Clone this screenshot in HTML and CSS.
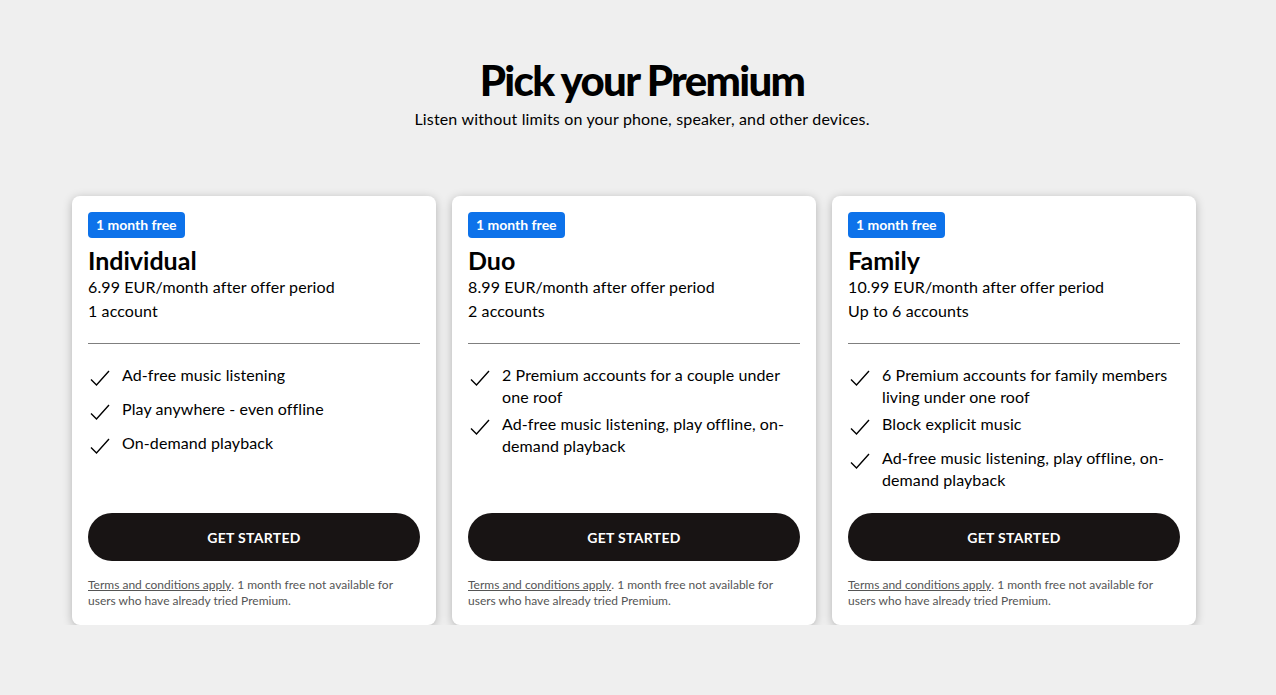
FILE: index.html
```html
<!DOCTYPE html>
<html lang="en">
  <head>
    <meta charset="utf-8">
    <meta name="viewport" content="width=device-width, initial-scale=1.0">
    <title>Pick your Premium</title>
    <link rel="stylesheet" href="styles.css">
  </head>
  <body>
    <!-- Cabecera -->
    <header class="intro">
      <h1>Pick your Premium</h1>
      <p>Listen without limits on your phone, speaker, and other devices.</p>
    </header>

    <!-- Planes -->
    <section class="plans">
      <div class="plan">
        <span class="badge">1 month free</span>
        <h2>Individual</h2>
        <p class="price">6.99 EUR/month after offer period</p>
        <p class="price">1 account</p>
        <hr class="divider">
        <ul class="features">
          <li><svg class="check" viewBox="0 0 24 24"><path d="M3 15.5l5.5 5.5L21 7"/></svg><span>Ad-free music listening</span></li>
          <li><svg class="check" viewBox="0 0 24 24"><path d="M3 15.5l5.5 5.5L21 7"/></svg><span>Play anywhere - even offline</span></li>
          <li><svg class="check" viewBox="0 0 24 24"><path d="M3 15.5l5.5 5.5L21 7"/></svg><span>On-demand playback</span></li>
        </ul>
        <button class="buttons">GET STARTED</button>
        <p class="terms"><a href="#">Terms and conditions apply</a>. 1 month free not available for users who have already tried Premium.</p>
      </div>

      <div class="plan">
        <span class="badge">1 month free</span>
        <h2>Duo</h2>
        <p class="price">8.99 EUR/month after offer period</p>
        <p class="price">2 accounts</p>
        <hr class="divider">
        <ul class="features">
          <li><svg class="check" viewBox="0 0 24 24"><path d="M3 15.5l5.5 5.5L21 7"/></svg><span>2 Premium accounts for a couple under one roof</span></li>
          <li><svg class="check" viewBox="0 0 24 24"><path d="M3 15.5l5.5 5.5L21 7"/></svg><span>Ad-free music listening, play offline, on-demand playback</span></li>
        </ul>
        <button class="buttons">GET STARTED</button>
        <p class="terms"><a href="#">Terms and conditions apply</a>. 1 month free not available for users who have already tried Premium.</p>
      </div>

      <div class="plan">
        <span class="badge">1 month free</span>
        <h2>Family</h2>
        <p class="price">10.99 EUR/month after offer period</p>
        <p class="price">Up to 6 accounts</p>
        <hr class="divider">
        <ul class="features">
          <li><svg class="check" viewBox="0 0 24 24"><path d="M3 15.5l5.5 5.5L21 7"/></svg><span>6 Premium accounts for family members living under one roof</span></li>
          <li><svg class="check" viewBox="0 0 24 24"><path d="M3 15.5l5.5 5.5L21 7"/></svg><span>Block explicit music</span></li>
          <li><svg class="check" viewBox="0 0 24 24"><path d="M3 15.5l5.5 5.5L21 7"/></svg><span>Ad-free music listening, play offline, on-demand playback</span></li>
        </ul>
        <button class="buttons">GET STARTED</button>
        <p class="terms"><a href="#">Terms and conditions apply</a>. 1 month free not available for users who have already tried Premium.</p>
      </div>
    </section>
  </body>
</html>
```

FILE: styles.css
```css
/* Reseteo */
* {
  margin: 0;
  padding: 0;
  box-sizing: border-box;
}

body {
  font-family: Lato, "Liberation Sans", sans-serif;
  background: #efefef;
  color: #000;
  padding-top: 54px;
}

/* Cabecera */
.intro {
  text-align: center;
  padding-left: 8px;
}

.intro h1 {
  font-size: 42px;
  line-height: 52px;
  font-weight: 900;
  letter-spacing: -1.7px;
}

.intro p {
  margin-top: 1px;
  font-size: 16px;
  line-height: 24px;
  letter-spacing: 0.17px;
}

/* Tarjetas */
.plans {
  display: grid;
  grid-template-columns: repeat(3, 364px);
  gap: 16px;
  justify-content: center;
  margin: 65px 8px 0 0;
}

.plan {
  display: flex;
  flex-direction: column;
  align-items: flex-start;
  background: #fff;
  border-radius: 8px;
  box-shadow: 0 2px 10px rgba(0, 0, 0, 0.25);
  padding: 16px;
}

.badge {
  background: #0d72ea;
  color: #fff;
  font-size: 14px;
  font-weight: 700;
  line-height: 26px;
  padding: 0 8px;
  border-radius: 4px;
}

.plan h2 {
  margin-top: 7px;
  font-size: 25px;
  line-height: 30px;
  font-weight: 700;
}

.price {
  font-size: 16px;
  line-height: 24px;
  letter-spacing: 0.1px;
}

.divider {
  width: 100%;
  border: none;
  border-top: 1px solid #7f7f7f;
  margin: 20px 0;
}

.features {
  list-style: none;
  display: flex;
  flex-direction: column;
  gap: 5px;
  margin-bottom: 22px;
  flex: 1;
}

.features li {
  display: flex;
  gap: 10px;
  min-height: 29px;
  font-size: 16px;
  line-height: 22px;
  letter-spacing: 0.1px;
}

.check {
  flex: none;
  width: 24px;
  height: 24px;
  fill: none;
  stroke: #000;
  stroke-width: 1.4;
}

.buttons {
  width: 100%;
  height: 48px;
  border: none;
  border-radius: 24px;
  background: #181414;
  color: #fff;
  font-family: inherit;
  font-size: 14px;
  font-weight: 700;
  letter-spacing: 0.3px;
  cursor: pointer;
}

.terms {
  margin-top: 16px;
  font-size: 12px;
  line-height: 16px;
  color: #555;
}

.terms a {
  display: inline-block;
  color: #555;
}
```
